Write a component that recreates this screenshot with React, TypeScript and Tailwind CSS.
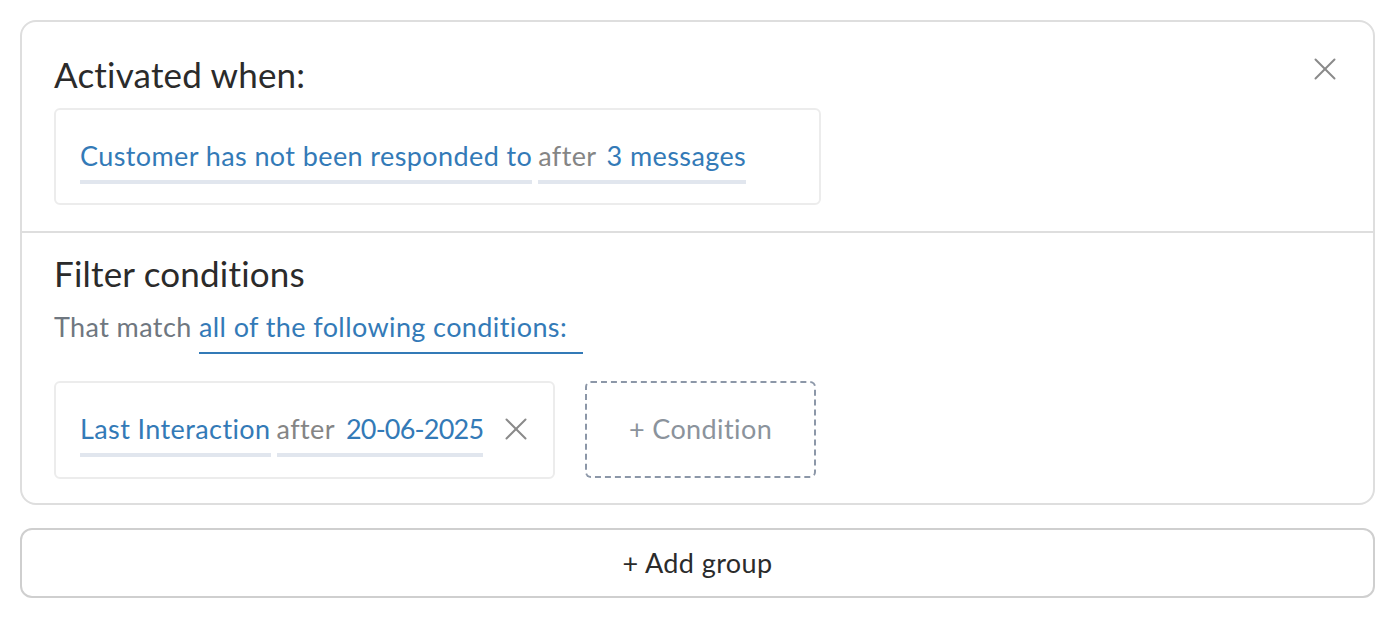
import { X } from 'lucide-react';

export default function App() {
  return (
    <div className="min-h-screen bg-white pt-5 pb-5 pl-5 pr-6 font-['Lato','Liberation_Sans',sans-serif]">
      {/* Group card */}
      <div className="rounded-2xl border-2 border-[#dedede] bg-white">
        <div className="relative px-8 pt-8 pb-[26px]">
          <h2 className="text-[35px] leading-[40px] tracking-[0.2px] text-[#2b2b2b]">Activated when:</h2>
          <button className="absolute right-[29px] top-[28px] text-[#8a8a8a]">
            <X className="h-[38px] w-[38px]" strokeWidth={1.25} />
          </button>
          <div className="mt-[14px] w-[767px] rounded-md border-2 border-[#ececec] px-6 pt-[28px] pb-[19px]">
            <div className="flex items-end gap-[6px] whitespace-nowrap text-[27px] leading-[36px] tracking-[0.4px]">
              <span className="border-b-4 border-[#e1e6ee] pb-[6px] text-[#337ab7]">
                Customer has not been responded to
              </span>
              <span className="flex gap-[10px] border-b-4 border-[#e1e6ee] pb-[6px]">
                <span className="text-[#858585]">after</span>
                <span className="text-[#337ab7]">3 messages</span>
              </span>
            </div>
          </div>
        </div>
        <div className="border-t-2 border-[#dedede] px-8 pt-[20px] pb-6">
          <h2 className="text-[35px] leading-[40px] tracking-[0.2px] text-[#2b2b2b]">Filter conditions</h2>
          <p className="mt-[16px] whitespace-nowrap text-[27px] leading-[36px] tracking-[0.4px] text-[#6f7780]">
            That match{' '}
            <span className="inline-block border-b-2 border-[#337ab7] pr-4 pb-[7px] text-[#337ab7]">
              all of the following conditions:
            </span>
          </p>
          <div className="mt-[27px] flex items-start gap-[30px]">
            <div className="flex w-[501px] items-start rounded-md border-2 border-[#ececec] px-6 pt-[28px] pb-[20px]">
              <div className="flex items-end gap-[6px] whitespace-nowrap text-[27px] leading-[36px] tracking-[0.4px]">
                <span className="border-b-4 border-[#e1e6ee] pb-[6px] text-[#337ab7]">Last Interaction</span>
                <span className="flex gap-[11px] border-b-4 border-[#e1e6ee] pb-[6px]">
                  <span className="text-[#858585]">after</span>
                  <span className="tracking-[-0.8px] text-[#337ab7]">20-06-2025</span>
                </span>
              </div>
              <X className="ml-[14px] -mt-[1px] h-[38px] w-[38px] shrink-0 text-[#8a8a8a]" strokeWidth={1.25} />
            </div>
            <button className="flex h-[97px] w-[231px] items-center justify-center rounded-md border-2 border-dashed border-[#8c97a8] text-[27px] tracking-[0.4px] text-[#8b939c]">
              + Condition
            </button>
          </div>
        </div>
      </div>
      {/* Add group */}
      <button className="mt-[23px] flex h-[70px] w-full items-center justify-center rounded-xl border-2 border-[#cfcfcf] text-[27px] tracking-[0.4px] text-[#2b2b2b]">
        + Add group
      </button>
    </div>
  );
}
